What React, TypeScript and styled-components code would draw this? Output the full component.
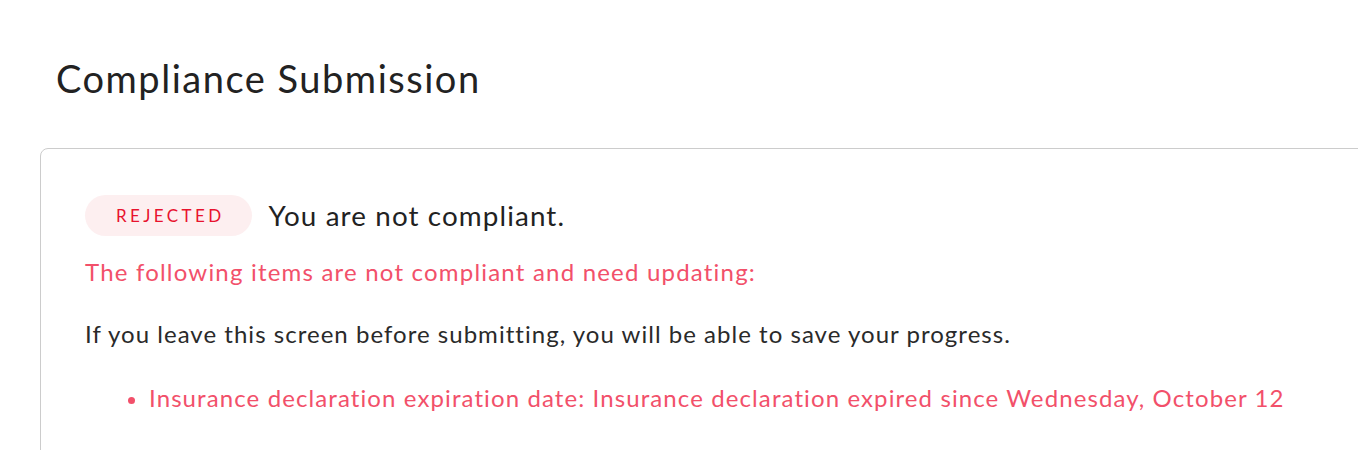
import React from "react";
import styled, { createGlobalStyle } from "styled-components";

const Global = createGlobalStyle`
  html, body { margin: 0; padding: 0; background: #ffffff; }
  body { font-family: Lato, "Noto Sans", sans-serif; color: #222222; }
`;

const Page = styled.div`
  padding: 52px 0 0 40px;
  overflow: hidden;
`;

const Title = styled.h1`
  margin: 0 0 0 16px;
  font-size: 38px;
  font-weight: 400;
  letter-spacing: 0.04em;
  line-height: 52px;
  color: #222222;
`;

const Card = styled.section`
  margin-top: 44px;
  width: 1400px;
  border: 1px solid #cccccc;
  border-radius: 8px;
  padding: 46px 44px 40px 44px;
  box-sizing: border-box;
  min-height: 320px;
`;

const StatusRow = styled.div`
  display: flex;
  align-items: center;
  gap: 17px;
`;

const Badge = styled.span`
  display: inline-flex;
  align-items: center;
  justify-content: center;
  height: 41px;
  padding: 0 27px 0 31px;
  border-radius: 21px;
  background: #fdeff0;
  color: #e8132e;
  font-size: 17px;
  letter-spacing: 3.4px;
  text-transform: uppercase;
`;

const StatusText = styled.span`
  font-size: 27.8px;
  letter-spacing: 0.04em;
  color: #222222;
`;

const Paragraph = styled.p<{ $tone?: "error" }>`
  margin: 0;
  font-size: 24px;
  letter-spacing: 1.03px;
  line-height: 30px;
  color: ${(p) => (p.$tone === "error" ? "#f2506a" : "#2a2a2a")};
`;

const Warning = styled(Paragraph)`
  margin-top: 21px;
  letter-spacing: 1.2px;
`;

const Note = styled(Paragraph)`
  margin-top: 32px;
`;

const List = styled.ul`
  margin: 34px 0 0 0;
  padding-left: 64px;
  color: #f2506a;
  font-size: 24px;
  letter-spacing: 1.1px;
  line-height: 30px;
  li::marker { font-size: 22px; }
`;

export default function App() {
  return (
    <>
      <Global />
      <Page>
        <Title>Compliance Submission</Title>
        <Card>
          <StatusRow>
            <Badge>Rejected</Badge>
            <StatusText>You are not compliant.</StatusText>
          </StatusRow>
          <Warning $tone="error">The following items are not compliant and need updating:</Warning>
          <Note>If you leave this screen before submitting, you will be able to save your progress.</Note>
          <List>
            <li>Insurance declaration expiration date: Insurance declaration expired since Wednesday, October 12</li>
          </List>
        </Card>
      </Page>
    </>
  );
}
